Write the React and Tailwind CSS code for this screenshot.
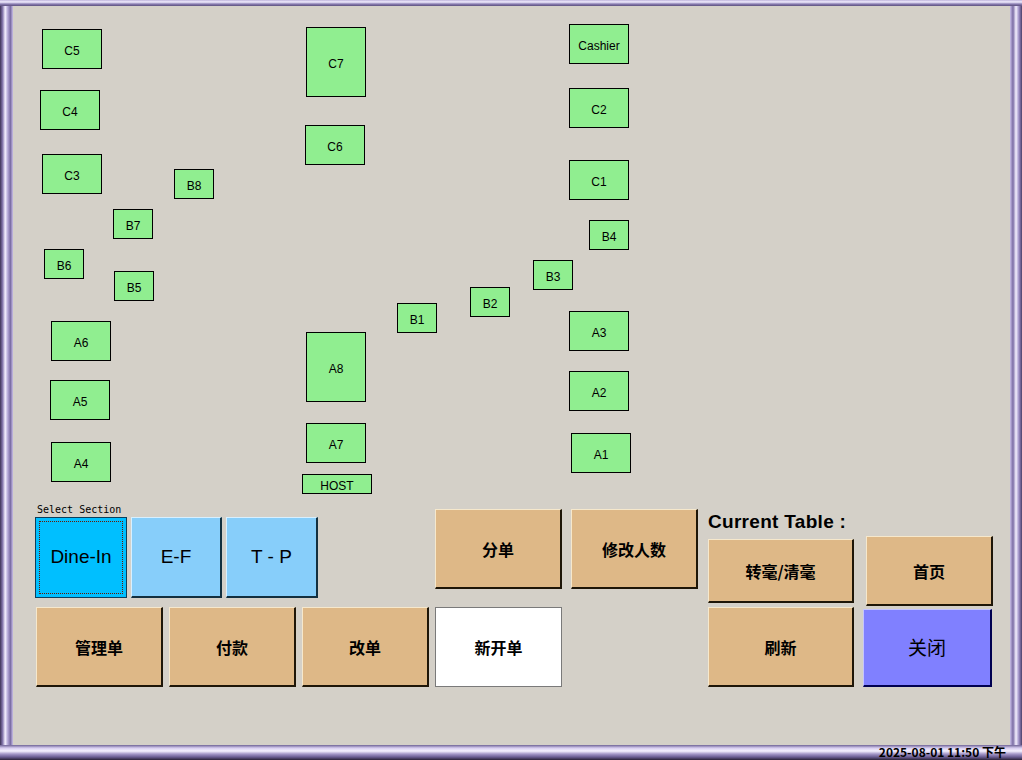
import React from 'react';

// floor plan tables, page coordinates of each box
const tables = [
  { id: 'C5', x: 42, y: 29, w: 60, h: 40 },
  { id: 'C4', x: 40, y: 90, w: 60, h: 40 },
  { id: 'C3', x: 42, y: 154, w: 60, h: 40 },
  { id: 'B8', x: 174, y: 169, w: 40, h: 30 },
  { id: 'B7', x: 113, y: 209, w: 40, h: 30 },
  { id: 'B6', x: 44, y: 249, w: 40, h: 30 },
  { id: 'B5', x: 114, y: 271, w: 40, h: 30 },
  { id: 'A6', x: 51, y: 321, w: 60, h: 40 },
  { id: 'A5', x: 50, y: 380, w: 60, h: 40 },
  { id: 'A4', x: 51, y: 442, w: 60, h: 40 },
  { id: 'C7', x: 306, y: 27, w: 60, h: 70 },
  { id: 'C6', x: 305, y: 125, w: 60, h: 40 },
  { id: 'A8', x: 306, y: 332, w: 60, h: 70 },
  { id: 'A7', x: 306, y: 423, w: 60, h: 40 },
  { id: 'HOST', x: 302, y: 474, w: 70, h: 20 },
  { id: 'B1', x: 397, y: 303, w: 40, h: 30 },
  { id: 'B2', x: 470, y: 287, w: 40, h: 30 },
  { id: 'B3', x: 533, y: 260, w: 40, h: 30 },
  { id: 'B4', x: 589, y: 220, w: 40, h: 30 },
  { id: 'Cashier', x: 569, y: 24, w: 60, h: 40 },
  { id: 'C2', x: 569, y: 88, w: 60, h: 40 },
  { id: 'C1', x: 569, y: 160, w: 60, h: 40 },
  { id: 'A3', x: 569, y: 311, w: 60, h: 40 },
  { id: 'A2', x: 569, y: 371, w: 60, h: 40 },
  { id: 'A1', x: 571, y: 433, w: 60, h: 40 },
];

const cjk = { fontFamily: '"Noto Sans CJK SC", "Liberation Sans", sans-serif' };

function TanButton({ label, className = '' }) {
  return (
    <div
      className={`flex items-center justify-center bg-[#deb887] border-t border-l border-r-2 border-b-2 border-t-[#f6e8cc] border-l-[#f6e8cc] border-r-[#1e1608] border-b-[#1e1608] text-[16px] font-bold text-black ${className}`}
      style={cjk}
    >
      {label}
    </div>
  );
}

export default function App() {
  return (
    <div className="w-[1022px] h-[760px] flex flex-col bg-[#2e2640] relative overflow-hidden font-['Liberation_Sans',sans-serif]">
      {/* top rail */}
      <div className="h-[6px] shrink-0 bg-[linear-gradient(to_bottom,#bfb4dc,#f2eeff,#8c7fb4,#5c507e)]" />
      <div className="flex flex-1 min-h-0">
        {/* left rail */}
        <div className="w-[13px] shrink-0 bg-[linear-gradient(to_right,#3c3256,#8577ad,#f4f0ff,#b2a6d6,#7a6ca4,#c8bee6)]" />

        <div className="flex-1 bg-[#d4d0c8] flex flex-col">
          {/* tables */}
          <div className="relative h-[497px] shrink-0">
            {tables.map((t) => (
              <div
                key={t.id}
                className="absolute flex items-center justify-center pt-[3px] bg-[#90ee90] border border-black text-[12px] text-black leading-none"
                style={{ left: t.x - 13, top: t.y - 6, width: t.w, height: t.h }}
              >
                {t.id}
              </div>
            ))}
          </div>

          {/* controls */}
          <div className="flex pl-[22px]">
            <div className="flex flex-col">
              <div className="flex items-start">
                <div className="flex flex-col">
                  <div className="h-[14px] pl-[2px] text-[10px] leading-[14px] text-black font-['DejaVu_Sans_Mono',monospace]">
                    Select Section
                  </div>
                  <div className="flex gap-[4px]">
                    <div className="w-[92px] h-[81px] bg-[#00bfff] border border-[#0b3f5c] p-[3px]">
                      <div className="w-full h-full border border-dotted border-[#6b1a00] flex items-center justify-center text-[19px] text-black">
                        Dine-In
                      </div>
                    </div>
                    <div className="w-[91px] h-[81px] flex items-center justify-center bg-[#87cefa] border-t border-l border-r-2 border-b-2 border-t-[#d8f0ff] border-l-[#d8f0ff] border-r-[#13303f] border-b-[#13303f] text-[19px] text-black">
                      E-F
                    </div>
                    <div className="w-[92px] h-[81px] flex items-center justify-center bg-[#87cefa] border-t border-l border-r-2 border-b-2 border-t-[#d8f0ff] border-l-[#d8f0ff] border-r-[#13303f] border-b-[#13303f] text-[19px] text-black">
                      T - P
                    </div>
                  </div>
                </div>
                <TanButton label="分单" className="w-[127px] h-[80px] ml-[117px] mt-[6px]" />
                <TanButton label="修改人数" className="w-[127px] h-[80px] ml-[9px] mt-[6px]" />
              </div>

              <div className="flex gap-[6px] mt-[9px] ml-[1px]">
                <TanButton label="管理单" className="w-[127px] h-[80px]" />
                <TanButton label="付款" className="w-[127px] h-[80px]" />
                <TanButton label="改单" className="w-[127px] h-[80px]" />
                <div
                  className="w-[127px] h-[80px] flex items-center justify-center bg-white border border-[#7a7a7a] text-[16px] font-bold text-black"
                  style={cjk}
                >
                  新开单
                </div>
              </div>
            </div>

            <div className="flex flex-col ml-[10px]">
              <div className="mt-[9px] h-[20px] text-[19px] leading-[20px] tracking-[0.3px] font-bold text-black whitespace-nowrap">
                Current Table :
              </div>
              <div className="flex items-start mt-[4px]">
                <TanButton label="转毫/清毫" className="w-[146px] h-[64px] mt-[3px]" />
                <TanButton label="首页" className="w-[127px] h-[70px] ml-[12px]" />
              </div>
              <div className="flex items-start mt-[1px]">
                <TanButton label="刷新" className="w-[146px] h-[80px]" />
                <div
                  className="w-[129px] h-[78px] ml-[9px] mt-[2px] flex items-center justify-center bg-[#8080ff] border-t border-l border-r-2 border-b-2 border-t-[#c4c4ff] border-l-[#c4c4ff] border-r-[#000050] border-b-[#000050] text-[19px] text-black"
                  style={cjk}
                >
                  关闭
                </div>
              </div>
            </div>
          </div>
        </div>

        {/* right rail */}
        <div className="w-[12px] shrink-0 bg-[linear-gradient(to_right,#c8bee6,#7a6ca4,#f4f0ff,#9a8cc4,#4a3f68)]" />
      </div>
      {/* bottom rail */}
      <div className="h-[15px] shrink-0 bg-[linear-gradient(to_bottom,#6f6396,#d6ccf0,#f6f2ff,#a497c8,#6a5d92,#2a2238)]" />

      <div
        className="absolute right-[16px] bottom-[1px] text-[12px] leading-[14px] font-bold text-black"
        style={cjk}
      >
        2025-08-01 11:50 下午
      </div>
    </div>
  );
}
